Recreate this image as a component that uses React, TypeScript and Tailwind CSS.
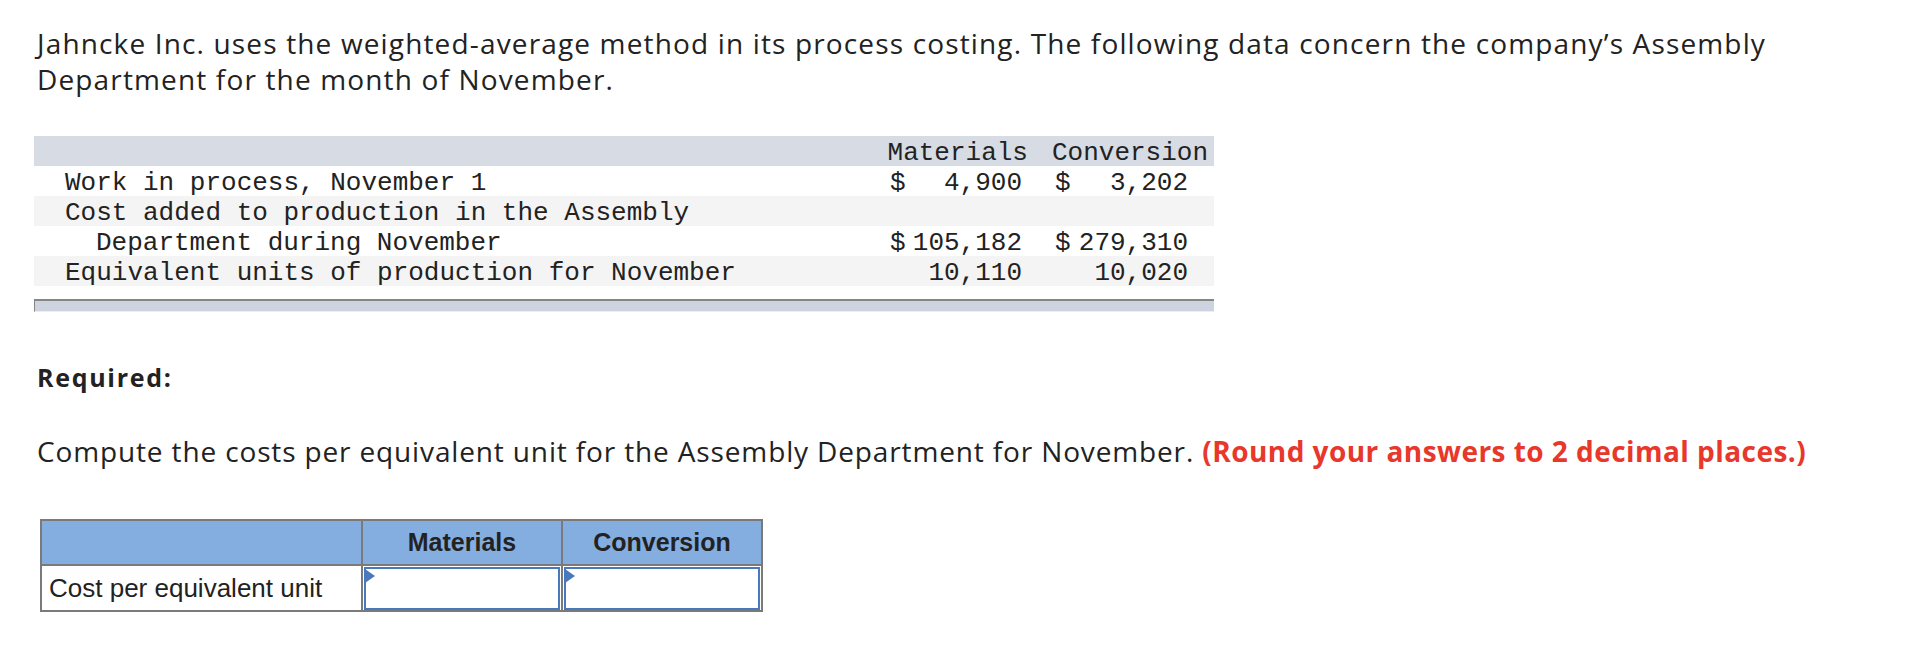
import * as React from "react"

const rows = [
  { label: "Work in process, November 1", indent: false, mat: "4,900", conv: "3,202", dollar: true, shade: false },
  { label: "Cost added to production in the Assembly", indent: false, mat: "", conv: "", dollar: false, shade: true },
  { label: "Department during November", indent: true, mat: "105,182", conv: "279,310", dollar: true, shade: false },
  { label: "Equivalent units of production for November", indent: false, mat: "10,110", conv: "10,020", dollar: false, shade: true },
]

function Cell({ dollar, value }: { dollar: boolean; value: string }) {
  return (
    <div className="flex justify-between">
      <span>{dollar ? "$" : ""}</span>
      <span>{value}</span>
    </div>
  )
}

function InputCell() {
  return (
    <div className="h-full p-[1px] pb-0">
      <div className="relative h-full border-2 border-[#4a78bc] bg-white">
        <svg className="absolute -left-[1px] top-0" width="10" height="14" viewBox="0 0 10 14">
          <polygon points="0,0 10,7 0,14" fill="#4a78bc" />
        </svg>
      </div>
    </div>
  )
}

export default function App() {
  return (
    <div className="w-[1928px] h-[660px] bg-white text-[#222] font-['Open_Sans',sans-serif] pt-[25px]">
      <p className="pl-[37px] text-[28px] leading-[36px] tracking-[1.15px] whitespace-nowrap">
        Jahncke Inc. uses the weighted-average method in its process costing. The following data concern the company’s Assembly
        <br />
        Department for the month of November.
      </p>

      <div className="ml-[34px] mt-[39px] w-[1180px] font-['Liberation_Mono',monospace] text-[26px] leading-[35px] text-[#222]">
        <div className="flex justify-end gap-[24px] bg-[#d6dbe4] pr-[6px] h-[30px]">
          <span>Materials</span>
          <span>Conversion</span>
        </div>
        {rows.map((r, i) => (
          <div
            key={i}
            className={`grid grid-cols-[823px_132px_133px] gap-x-[33px] h-[30px] whitespace-nowrap ${r.shade ? "bg-[#f4f4f4]" : "bg-white"}`}
          >
            <div className={r.indent ? "pl-[62px]" : "pl-[31px]"}>{r.label}</div>
            <Cell dollar={r.dollar} value={r.mat} />
            <Cell dollar={r.dollar} value={r.conv} />
          </div>
        ))}
        <div className="mt-[13px] h-[13px] border-t-2 border-l border-[#858585] bg-[#cdd4df] border-b border-b-[#e8edf6]" />
      </div>

      <h3 className="pl-[37px] mt-[50px] text-[25px] font-bold leading-[30px] tracking-[1.7px]">Required:</h3>

      <p className="pl-[37px] mt-[41px] text-[28px] leading-[36px] tracking-[0.86px] whitespace-nowrap">
        Compute the costs per equivalent unit for the Assembly Department for November.{" "}
        <span className="font-bold text-[#e8372b] tracking-[0.45px]">(Round your answers to 2 decimal places.)</span>
      </p>

      <div className="ml-[40px] mt-[50px] w-[723px] border-2 border-[#7a7a7a] font-['Liberation_Sans',Arial,sans-serif] text-[#222]">
        <div className="grid grid-cols-[321px_200px_198px] h-[45px] bg-[#84aedf] border-b-2 border-[#7a7a7a] text-[25px] font-bold">
          <div className="border-r-2 border-[#7a7a7a]" />
          <div className="flex items-center justify-center border-r-2 border-[#7a7a7a]">Materials</div>
          <div className="flex items-center justify-center">Conversion</div>
        </div>
        <div className="grid grid-cols-[321px_200px_198px] h-[44px] text-[26px]">
          <div className="flex items-center pl-[7px] border-r-2 border-[#7a7a7a]">Cost per equivalent unit</div>
          <div className="border-r-2 border-[#7a7a7a]">
            <InputCell />
          </div>
          <div>
            <InputCell />
          </div>
        </div>
      </div>
    </div>
  )
}
